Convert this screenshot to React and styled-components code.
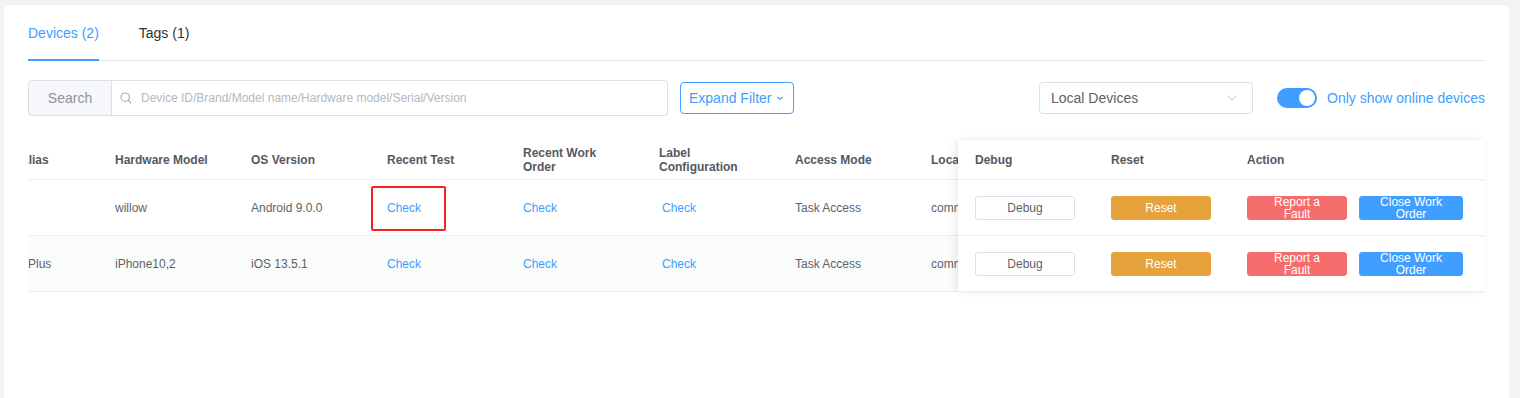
import React from "react";
import styled, { createGlobalStyle } from "styled-components";

const Global = createGlobalStyle`
  html, body { margin: 0; padding: 0; }
  body {
    background: #f2f3f5;
    font-family: "Liberation Sans", Arial, Helvetica, sans-serif;
    color: #606266;
  }
  * { box-sizing: border-box; }
`;

const Page = styled.div`
  padding: 5px 11px 0 4px;
  height: 398px;
  overflow: hidden;
`;

const Card = styled.div`
  background: #fff;
  border-radius: 6px;
  min-height: 420px;
  padding: 0 24px;
`;

const Tabs = styled.div`
  display: flex;
  gap: 40px;
  height: 56px;
  border-bottom: 1px solid #e4e7ed;
`;

const Tab = styled.div`
  position: relative;
  display: flex;
  align-items: center;
  font-size: 14px;
  color: ${(p) => (p.$active ? "#409eff" : "#303133")};
  &::after {
    content: "";
    display: ${(p) => (p.$active ? "block" : "none")};
    position: absolute;
    left: 0;
    right: 0;
    bottom: -1px;
    height: 2px;
    background: #409eff;
  }
`;

const Toolbar = styled.div`
  display: flex;
  align-items: center;
  height: 36px;
  margin-top: 19px;
`;

const SearchGroup = styled.div`
  display: flex;
  width: 640px;
  height: 36px;
`;

const SearchBtn = styled.div`
  width: 84px;
  display: flex;
  align-items: center;
  justify-content: center;
  background: #f5f7fa;
  border: 1px solid #dcdfe6;
  border-radius: 4px 0 0 4px;
  color: #909399;
  font-size: 14px;
`;

const InputBox = styled.div`
  flex: 1;
  display: flex;
  align-items: center;
  gap: 9px;
  padding-left: 8px;
  border: 1px solid #dcdfe6;
  border-left: none;
  border-radius: 0 4px 4px 0;
`;

const Input = styled.input`
  flex: 1;
  border: none;
  outline: none;
  background: transparent;
  font-family: inherit;
  font-size: 12px;
  color: #606266;
  padding: 0;
  &::placeholder { color: #b4b8bf; }
`;

const OutlineBtn = styled.div`
  margin-left: 12px;
  height: 32px;
  width: 114px;
  display: flex;
  align-items: center;
  gap: 5px;
  padding: 0 8px;
  border: 1px solid #409eff;
  border-radius: 4px;
  color: #409eff;
  font-size: 14px;
  white-space: nowrap;
`;

const Spacer = styled.div`
  flex: 1;
`;

const Select = styled.div`
  width: 214px;
  height: 32px;
  display: flex;
  align-items: center;
  justify-content: space-between;
  padding: 0 14px 0 11px;
  border: 1px solid #dcdfe6;
  border-radius: 4px;
  color: #606266;
  font-size: 14px;
`;

const Switch = styled.div`
  margin-left: 24px;
  width: 40px;
  height: 20px;
  border-radius: 10px;
  background: #409eff;
  display: flex;
  align-items: center;
  justify-content: flex-end;
  padding: 0 2px;
`;

const Knob = styled.div`
  width: 16px;
  height: 16px;
  border-radius: 50%;
  background: #fff;
`;

const SwitchLabel = styled.span`
  margin-left: 10px;
  color: #409eff;
  font-size: 14px;
`;

const Table = styled.div`
  display: flex;
  margin-top: 24px;
`;

const ScrollPart = styled.div`
  flex: 1;
  overflow: hidden;
`;

const ScrollInner = styled.div`
  margin-left: -14px;
  width: max-content;
`;

const FixedPart = styled.div`
  flex: none;
  width: 527px;
  background: #fff;
  box-shadow: -3px 0 8px rgba(0, 0, 0, 0.07), 0 -1px 4px rgba(0, 0, 0, 0.03);
  position: relative;
`;

const Row = styled.div`
  display: flex;
  height: ${(p) => (p.$head ? "40px" : "56px")};
  border-bottom: 1px solid #ebeef5;
  background: ${(p) => (p.$tint ? "#fafbfb" : "transparent")};
`;

const Cell = styled.div`
  position: relative;
  flex: none;
  width: ${(p) => p.$w}px;
  padding-left: ${(p) => p.$pl ?? 10}px;
  display: flex;
  align-items: center;
  gap: 12px;
  font-size: 12px;
  white-space: nowrap;
  color: #606266;
`;

const HeadCell = styled(Cell)`
  font-weight: bold;
  color: #55585f;
  white-space: normal;
  line-height: 14px;
`;

const HeadText = styled.span`
  max-width: 100px;
`;

const Link = styled.span`
  color: #409eff;
  margin-left: ${(p) => p.$shift || 0}px;
`;

const AliasText = styled.span`
  margin-left: -2px;
`;

const Highlight = styled.div`
  position: absolute;
  left: -6px;
  top: 6px;
  width: 75px;
  height: 45px;
  border: 2px solid #f5221c;
  border-radius: 2px;
`;

const Btn = styled.div`
  width: ${(p) => p.$w || 100}px;
  height: 24px;
  display: flex;
  align-items: center;
  justify-content: center;
  text-align: center;
  padding: 0 15px;
  border-radius: 3px;
  font-size: 12px;
  line-height: 12px;
  white-space: normal;
  color: ${(p) => (p.$bg ? "#fff" : "#606266")};
  background: ${(p) => p.$bg || "#fff"};
  border: 1px solid ${(p) => p.$bg || "#dcdfe6"};
`;

const SearchIcon = () => (
  <svg width="12" height="12" viewBox="0 0 12 12" fill="none" stroke="#a8abb2" strokeWidth="1.1">
    <circle cx="5.2" cy="5.2" r="4.2" />
    <path d="M8.3 8.3 L11 11" strokeLinecap="round" />
  </svg>
);

const SmallChevron = () => (
  <svg width="8" height="6" viewBox="0 0 8 6" fill="none" stroke="#409eff" strokeWidth="1.2">
    <path d="M1.5 1.8 L4 4.3 L6.5 1.8" />
  </svg>
);

const SelectChevron = () => (
  <svg width="12" height="8" viewBox="0 0 12 8" fill="none" stroke="#c0c4cc" strokeWidth="1">
    <path d="M1 1.5 L6 6 L11 1.5" />
  </svg>
);

const cols = [
  { key: "alias", label: "Alias", w: 91, pl: 6 },
  { key: "hw", label: "Hardware Model", w: 136 },
  { key: "os", label: "OS Version", w: 136 },
  { key: "test", label: "Recent Test", w: 136 },
  { key: "wo", label: "Recent Work Order", w: 136 },
  { key: "label", label: "Label Configuration", w: 136 },
  { key: "access", label: "Access Mode", w: 136 },
  { key: "loc", label: "Location", w: 136 },
];

const rows = [
  { alias: "", hw: "willow", os: "Android 9.0.0", access: "Task Access", loc: "common", mark: true },
  { alias: "8 Plus", hw: "iPhone10,2", os: "iOS 13.5.1", access: "Task Access", loc: "common" },
];

const renderCell = (c, r) => {
  if (c.key === "test")
    return (
      <>
        <Link>Check</Link>
        {r.mark && <Highlight />}
      </>
    );
  if (c.key === "wo") return <Link>Check</Link>;
  if (c.key === "label") return <Link $shift={3}>Check</Link>;
  if (c.key === "alias") return <AliasText>{r.alias}</AliasText>;
  return r[c.key];
};

export default function App() {
  return (
    <>
      <Global />
      <Page>
        <Card>
          <Tabs>
            <Tab $active>Devices (2)</Tab>
            <Tab>Tags (1)</Tab>
          </Tabs>
          <Toolbar>
            <SearchGroup>
              <SearchBtn>Search</SearchBtn>
              <InputBox>
                <SearchIcon />
                <Input placeholder="Device ID/Brand/Model name/Hardware model/Serial/Version" />
              </InputBox>
            </SearchGroup>
            <OutlineBtn>
              Expand Filter
              <SmallChevron />
            </OutlineBtn>
            <Spacer />
            <Select>
              Local Devices
              <SelectChevron />
            </Select>
            <Switch>
              <Knob />
            </Switch>
            <SwitchLabel>Only show online devices</SwitchLabel>
          </Toolbar>
          <Table>
            <ScrollPart>
              <ScrollInner>
                <Row $head>
                  {cols.map((c) => (
                    <HeadCell key={c.key} $w={c.w} $pl={c.pl}>
                      <HeadText>{c.label}</HeadText>
                    </HeadCell>
                  ))}
                </Row>
                {rows.map((r, i) => (
                  <Row key={i} $tint={i === 1}>
                    {cols.map((c) => (
                      <Cell key={c.key} $w={c.w} $pl={c.pl}>
                        {renderCell(c, r)}
                      </Cell>
                    ))}
                  </Row>
                ))}
              </ScrollInner>
            </ScrollPart>
            <FixedPart>
              <Row $head>
                <HeadCell $w={143} $pl={17}>Debug</HeadCell>
                <HeadCell $w={136}>Reset</HeadCell>
                <HeadCell $w={248}>Action</HeadCell>
              </Row>
              {rows.map((r, i) => (
                <Row key={i}>
                  <Cell $w={143} $pl={17}>
                    <Btn>Debug</Btn>
                  </Cell>
                  <Cell $w={136}>
                    <Btn $bg="#e6a23c">Reset</Btn>
                  </Cell>
                  <Cell $w={248}>
                    <Btn $bg="#f56c6c">Report a Fault</Btn>
                    <Btn $bg="#409eff" $w={104}>Close Work Order</Btn>
                  </Cell>
                </Row>
              ))}
            </FixedPart>
          </Table>
        </Card>
      </Page>
    </>
  );
}
